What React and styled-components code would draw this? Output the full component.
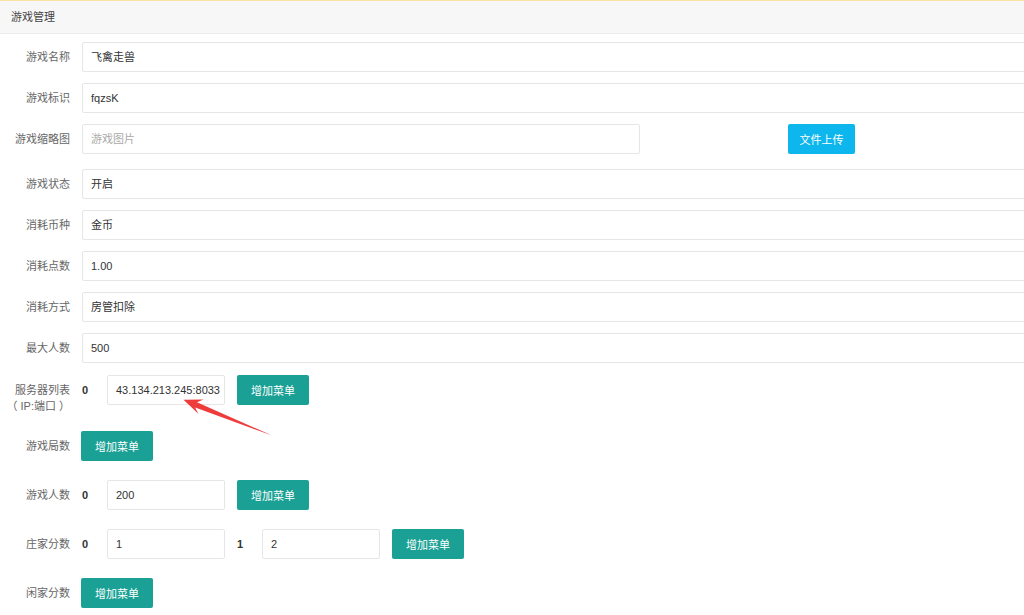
import React from 'react';
import styled, { createGlobalStyle } from 'styled-components';

const GlobalStyle = createGlobalStyle`
  html, body {
    margin: 0;
    padding: 0;
    background: #fff;
    overflow: hidden;
  }
  body {
    font-family: "Liberation Sans", "Noto Sans CJK SC", sans-serif;
    font-size: 11px;
    color: #333;
  }
`;

// Page wrapper
const Page = styled.div`
  position: relative;
  width: 1024px;
  height: 615px;
  overflow: hidden;
  border-top: 1px solid #f8e2a4;
  box-sizing: border-box;
`;

const Header = styled.div`
  height: 32px;
  line-height: 32px;
  padding-left: 11px;
  background: #f7f7f7;
  border-bottom: 1px solid #ececec;
  color: #444;
`;

const Form = styled.div`
  display: flex;
  flex-direction: column;
  padding-top: 8px;
`;

const Row = styled.div`
  display: flex;
  align-items: flex-start;
  margin-bottom: ${({ gap }) => gap}px;
`;

const Label = styled.label`
  width: 70px;
  flex-shrink: 0;
  padding: 7px 12px 0 0;
  line-height: 16px;
  text-align: right;
  color: #666;
`;

const Input = styled.div`
  height: 30px;
  line-height: 28px;
  box-sizing: border-box;
  border: 1px solid #e6e6e6;
  border-radius: 2px;
  padding-left: 8px;
  background: #fff;
  color: ${({ placeholder }) => (placeholder ? '#aaa' : '#333')};
  white-space: nowrap;
  overflow: hidden;
  flex: ${({ width }) => (width ? `0 0 ${width}px` : '1')};
  margin-right: ${({ width }) => (width ? '12px' : '-20px')};
`;

const Index = styled.span`
  width: 25px;
  flex-shrink: 0;
  line-height: 30px;
  font-weight: bold;
  color: #333;
`;

const Button = styled.button`
  height: 30px;
  width: ${({ wide }) => (wide ? 67 : 72)}px;
  padding: 0;
  border: none;
  border-radius: 2px;
  background: ${({ blue }) => (blue ? '#0db6ec' : '#1aa094')};
  color: #fff;
  font-family: "Liberation Sans", "Noto Sans CJK SC", sans-serif;
  font-size: 11px;
  margin-left: ${({ offset }) => offset || 0}px;
  flex-shrink: 0;
  cursor: pointer;
`;

const Arrow = styled.svg`
  position: absolute;
  left: 0;
  top: 0;
  pointer-events: none;
`;

const textRows = [
  ['游戏名称', '飞禽走兽'],
  ['游戏标识', 'fqzsK'],
];

const moreRows = [
  ['游戏状态', '开启'],
  ['消耗币种', '金币'],
  ['消耗点数', '1.00'],
  ['消耗方式', '房管扣除'],
];

export default function App() {
  return (
    <Page>
      <GlobalStyle />
      <Header>游戏管理</Header>
      <Form>
        {textRows.map(([label, value]) => (
          <Row key={label} gap={11}>
            <Label>{label}</Label>
            <Input>{value}</Input>
          </Row>
        ))}
        <Row gap={15}>
          <Label>游戏缩略图</Label>
          <Input width={558} placeholder="1">游戏图片</Input>
          <Button blue wide offset={136}>文件上传</Button>
        </Row>
        {moreRows.map(([label, value]) => (
          <Row key={label} gap={11}>
            <Label>{label}</Label>
            <Input>{value}</Input>
          </Row>
        ))}
        <Row gap={12}>
          <Label>最大人数</Label>
          <Input>500</Input>
        </Row>
        <Row gap={17}>
          <Label>服务器列表<br />（ IP:端口 ）</Label>
          <Index>0</Index>
          <Input width={118}>43.134.213.245:8033</Input>
          <Button>增加菜单</Button>
        </Row>
        <Row gap={19}>
          <Label>游戏局数</Label>
          <Button offset={-1}>增加菜单</Button>
        </Row>
        <Row gap={19}>
          <Label>游戏人数</Label>
          <Index>0</Index>
          <Input width={118}>200</Input>
          <Button>增加菜单</Button>
        </Row>
        <Row gap={19}>
          <Label>庄家分数</Label>
          <Index>0</Index>
          <Input width={118}>1</Input>
          <Index>1</Index>
          <Input width={118}>2</Input>
          <Button>增加菜单</Button>
        </Row>
        <Row gap={0}>
          <Label>闲家分数</Label>
          <Button offset={-1}>增加菜单</Button>
        </Row>
      </Form>
      <Arrow width="1024" height="615" viewBox="0 0 1024 615">
        <polygon
          points="272,434.5 197,401.2 203.6,398.6 183.5,398.8 198.3,412.8 195.2,406.4"
          fill="#ee3b3b"
        />
      </Arrow>
    </Page>
  );
}
